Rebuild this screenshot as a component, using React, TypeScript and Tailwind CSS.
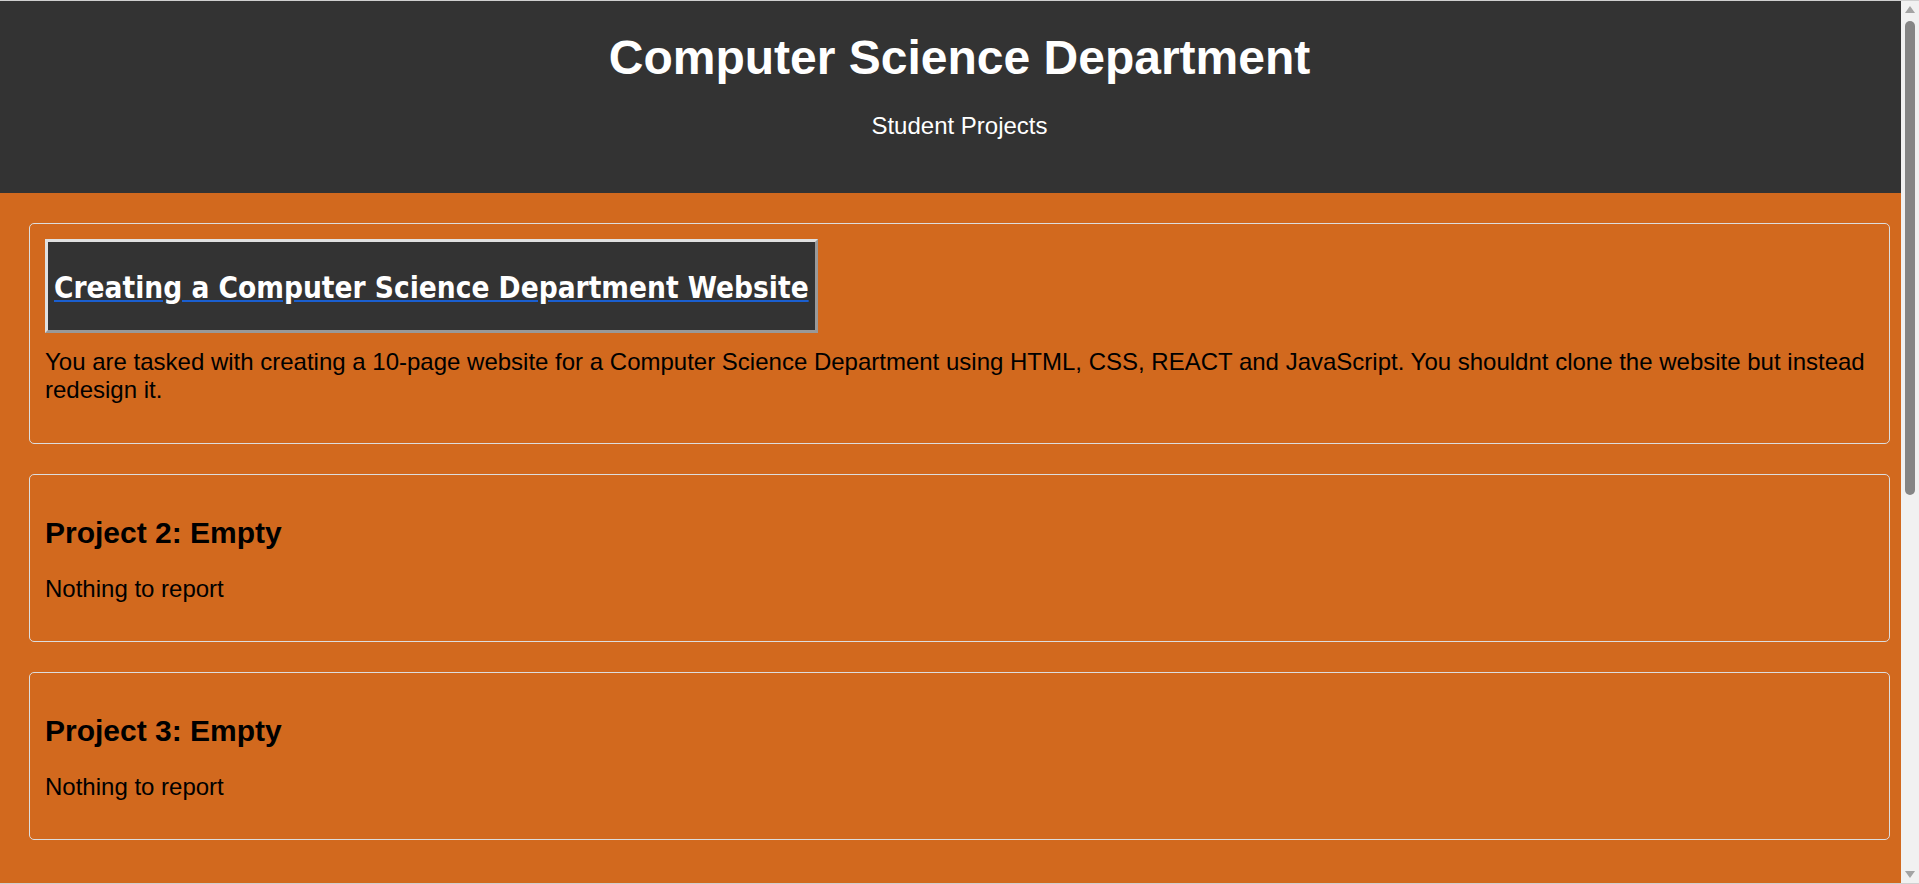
const projects = [
  { title: 'Project 2: Empty', text: 'Nothing to report' },
  { title: 'Project 3: Empty', text: 'Nothing to report' },
];

export default function App() {
  return (
    <div className="relative h-screen overflow-hidden border-y border-[#d0d0d0] bg-[#d2691e] font-['Liberation_Sans',Arial,sans-serif]">
      {/* header */}
      <header className="bg-[#333] text-white text-center pt-[29px] pb-[53px]">
        <h1 className="text-[48px] font-bold leading-[55px] mb-[27px]">Computer Science Department</h1>
        <p className="text-[24px] leading-[28px]">Student Projects</p>
      </header>

      {/* project list */}
      <main className="flex flex-col gap-[30px] px-[29px] pt-[30px]">
        <section className="rounded-[5px] border border-[#ddd] p-[15px] text-black">
          <a href="#" className="block w-fit">
            <h2 className="bg-[#333] border-[3px] border-t-[#e0e0e0] border-l-[#e0e0e0] border-b-[#999] border-r-[#999] px-[6px] pt-[30px] pb-[26px] text-white font-bold text-[29.5px] leading-[32px] font-stretch-condensed font-['DejaVu_Sans_Condensed','DejaVu_Sans',sans-serif]">
              <span className="underline decoration-[#1a5fd0]">Creating a Computer Science Department Website</span>
            </h2>
          </a>
          <p className="mt-[15px] mb-[24px] text-[24px] leading-[28px]">
            You are tasked with creating a 10-page website for a Computer Science Department using HTML, CSS, REACT and JavaScript. You shouldnt clone the website but instead redesign it.
          </p>
        </section>

        {projects.map((p) => (
          <section key={p.title} className="rounded-[5px] border border-[#ddd] p-[15px] text-black">
            <h3 className="mt-[26px] mb-[25px] text-[30px] font-bold leading-[34px]">{p.title}</h3>
            <p className="mb-[23px] text-[24px] leading-[28px]">{p.text}</p>
          </section>
        ))}
      </main>

      {/* scrollbar */}
      <div className="absolute right-0 top-0 bottom-0 w-[18px] bg-[#f1f1f1] flex flex-col items-center">
        <svg width="10" height="7" viewBox="0 0 10 7" className="mt-[5px]">
          <path d="M5 0 L10 7 L0 7 Z" fill="#a3a3a3" />
        </svg>
        <div className="mt-[8px] w-[10px] h-[474px] rounded-full bg-[#858585]" />
        <div className="flex-1" />
        <svg width="10" height="7" viewBox="0 0 10 7" className="mb-[5px]">
          <path d="M0 0 L10 0 L5 7 Z" fill="#a3a3a3" />
        </svg>
      </div>
    </div>
  );
}
